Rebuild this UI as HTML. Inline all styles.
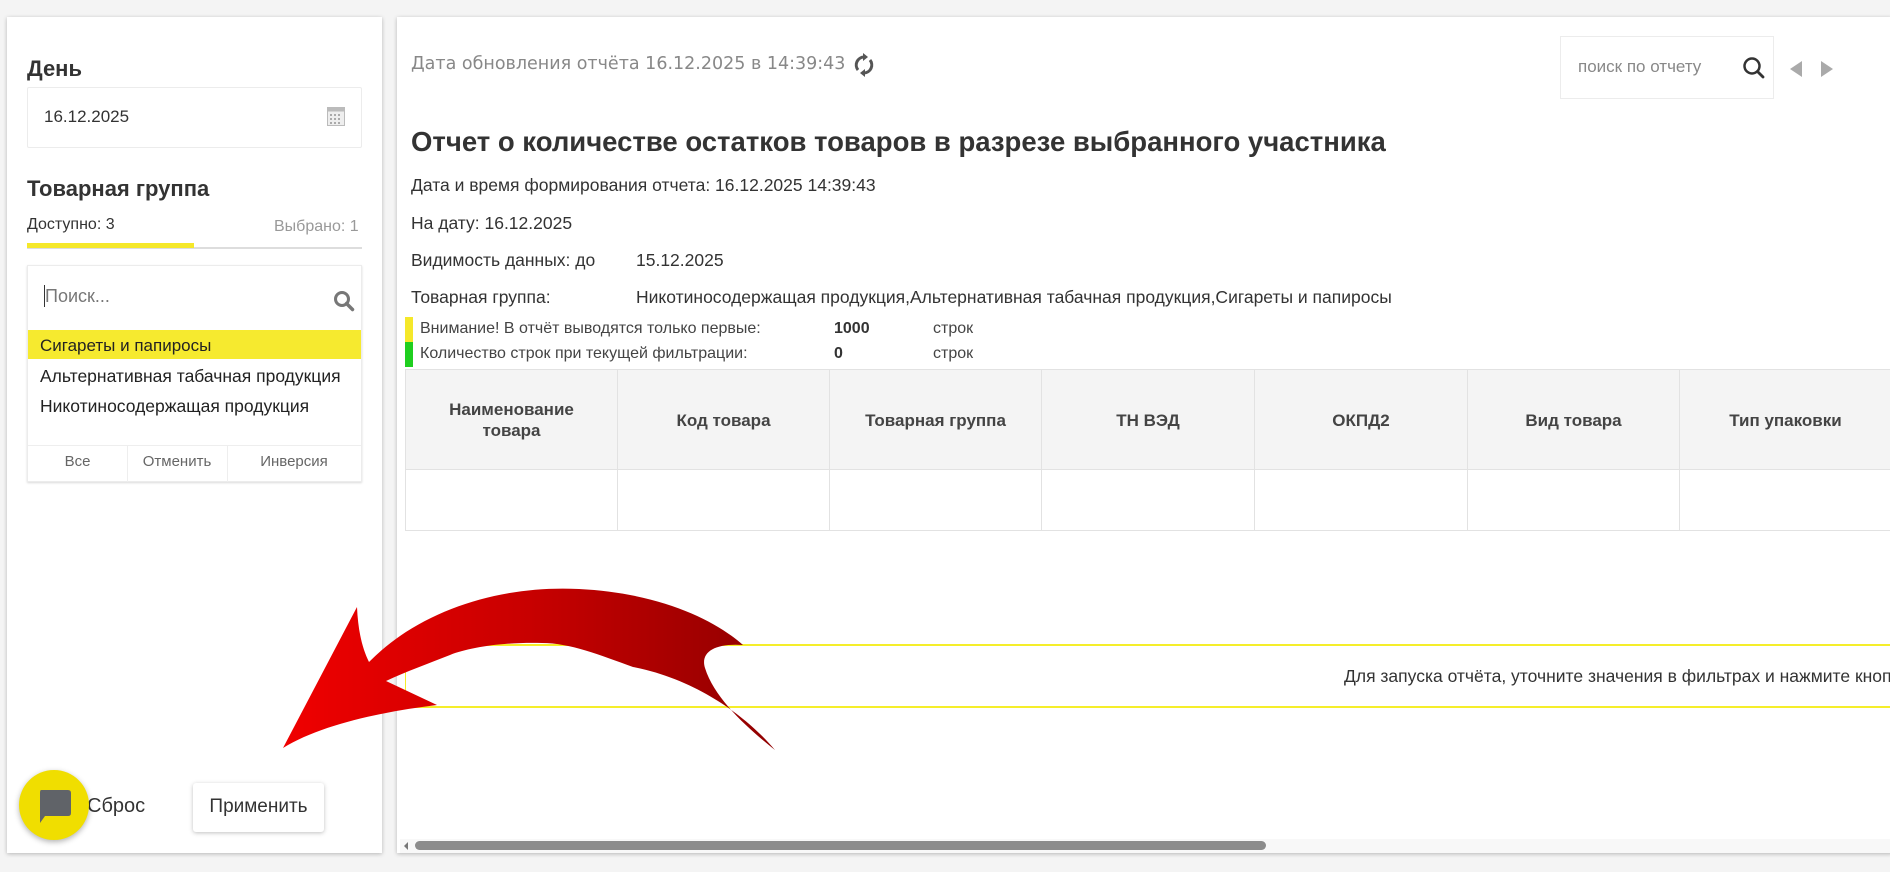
<!DOCTYPE html>
<html><head><meta charset="utf-8">
<style>
*{margin:0;padding:0;box-sizing:border-box}
html,body{width:1890px;height:872px;overflow:hidden;background:#f4f4f4;font-family:"Liberation Sans",Arial,sans-serif;color:#333}
.abs{position:absolute}
.panel{position:absolute;background:#fff;box-shadow:0 1px 4px rgba(0,0,0,.25)}
.t{position:absolute;white-space:nowrap}
.th{position:absolute;top:0;height:100px;border-right:1px solid #e2e2e2;display:flex;align-items:center;justify-content:center;text-align:center;font-weight:bold;font-size:17px;color:#444;line-height:21px}
.td{position:absolute;top:100px;height:61px;border-right:1px solid #e2e2e2}
</style></head><body>

<!-- left panel -->
<div class="panel" style="left:7px;top:17px;width:375px;height:836px"></div>
<div class="t" style="left:27px;top:56px;font-size:22px;font-weight:bold;color:#333">День</div>
<div class="abs" style="left:27px;top:87px;width:335px;height:61px;border:1px solid #ececec;border-radius:2px"></div>
<div class="t" style="left:44px;top:107px;font-size:17px;color:#333">16.12.2025</div>
<svg class="abs" style="left:327px;top:107px" width="18" height="19" viewBox="0 0 18 19"><rect x="0.5" y="0.5" width="17" height="18" fill="#eee" stroke="#bbb"/><rect x="0.5" y="0.5" width="17" height="4" fill="#bbb"/><g fill="#aaa"><rect x="3" y="7" width="2" height="2"/><rect x="7" y="7" width="2" height="2"/><rect x="11" y="7" width="2" height="2"/><rect x="3" y="11" width="2" height="2"/><rect x="7" y="11" width="2" height="2"/><rect x="11" y="11" width="2" height="2"/><rect x="3" y="15" width="2" height="2"/><rect x="7" y="15" width="2" height="2"/><rect x="11" y="15" width="2" height="2"/></g></svg>

<div class="t" style="left:27px;top:176px;font-size:22px;font-weight:bold;color:#333">Товарная группа</div>
<div class="t" style="left:27px;top:216px;font-size:16px;color:#333">Доступно: 3</div>
<div class="t" style="left:274px;top:218px;font-size:16px;color:#999">Выбрано: 1</div>
<div class="abs" style="left:27px;top:247px;width:335px;height:2px;background:#ddd"></div>
<div class="abs" style="left:27px;top:243px;width:167px;height:5px;background:#f5e82a"></div>

<div class="abs" style="left:27px;top:265px;width:335px;height:217px;border:1px solid #ececec;box-shadow:0 1px 2px rgba(0,0,0,.15)"></div>
<div class="abs" style="left:44px;top:285px;width:1px;height:22px;background:#333"></div>
<div class="t" style="left:45px;top:286px;font-size:18px;color:#777">Поиск...</div>
<svg class="abs" style="left:333px;top:290px" width="22" height="22" viewBox="0 0 22 22"><circle cx="9" cy="9" r="6.5" fill="none" stroke="#777" stroke-width="3"/><line x1="13.5" y1="13.5" x2="19.5" y2="19.5" stroke="#777" stroke-width="3.5" stroke-linecap="round"/></svg>
<div class="abs" style="left:28px;top:330px;width:333px;height:29px;background:#f6ea2f"></div>
<div class="t" style="left:40px;top:336px;font-size:17px;color:#222">Сигареты и папиросы</div>
<div class="t" style="left:40px;top:366px;font-size:17.5px;color:#222">Альтернативная табачная продукция</div>
<div class="t" style="left:40px;top:396px;font-size:17.5px;color:#222">Никотиносодержащая продукция</div>
<div class="abs" style="left:28px;top:445px;width:333px;height:1px;background:#eee"></div>
<div class="abs" style="left:127px;top:446px;width:1px;height:36px;background:#eee"></div>
<div class="abs" style="left:227px;top:446px;width:1px;height:36px;background:#eee"></div>
<div class="t" style="left:28px;top:453px;width:99px;text-align:center;font-size:15px;color:#666">Все</div>
<div class="t" style="left:127px;top:453px;width:100px;text-align:center;font-size:15px;color:#666">Отменить</div>
<div class="t" style="left:227px;top:453px;width:134px;text-align:center;font-size:15px;color:#666">Инверсия</div>

<div class="t" style="left:87px;top:795px;font-size:20px;color:#333">Сброс</div>
<div class="abs" style="left:193px;top:783px;width:131px;height:49px;background:#fff;border-radius:3px;box-shadow:0 1px 4px rgba(0,0,0,.25)"></div>
<div class="t" style="left:193px;top:796px;width:131px;text-align:center;font-size:19px;color:#333">Применить</div>
<div class="abs" style="left:19px;top:770px;width:70px;height:70px;border-radius:50%;background:#f0de00;box-shadow:0 2px 6px rgba(0,0,0,.3)"></div>
<svg class="abs" style="left:37px;top:790px" width="36" height="34" viewBox="0 0 36 34"><path d="M4 0 H31 Q34 0 34 3 V23 Q34 26 31 26 H8 L3 33 V3 Q3 0 4 0 Z" fill="#606368"/></svg>

<!-- right panel -->
<div class="panel" style="left:397px;top:17px;width:1496px;height:836px"></div>
<div class="t" style="left:411px;top:54px;font-family:'DejaVu Sans',Verdana,sans-serif;font-size:17.5px;color:#888">Дата обновления отчёта 16.12.2025 в 14:39:43</div>
<svg class="abs" style="left:853px;top:53px" width="22" height="24" viewBox="0 0 22 24"><path d="M11 4 A8 8 0 0 0 5 17" fill="none" stroke="#555" stroke-width="3"/><path d="M11 20 A8 8 0 0 0 17 7" fill="none" stroke="#555" stroke-width="3"/><path d="M10 0 L15 4 L10 8 Z" fill="#555"/><path d="M12 24 L7 20 L12 16 Z" fill="#555"/></svg>

<div class="abs" style="left:1560px;top:36px;width:214px;height:63px;border:1px solid #ececec"></div>
<div class="t" style="left:1578px;top:57px;font-size:17px;color:#888">поиск по отчету</div>
<svg class="abs" style="left:1742px;top:56px" width="24" height="24" viewBox="0 0 24 24"><circle cx="10" cy="10" r="7.5" fill="none" stroke="#333" stroke-width="2.5"/><line x1="15.5" y1="15.5" x2="21" y2="21" stroke="#333" stroke-width="2.8" stroke-linecap="round"/></svg>
<svg class="abs" style="left:1787px;top:60px" width="50" height="18" viewBox="0 0 50 18"><path d="M15 1 L3 9 L15 17 Z" fill="#aaa"/><path d="M34 1 L46 9 L34 17 Z" fill="#aaa"/></svg>

<div class="t" style="left:411px;top:126px;font-size:27.5px;font-weight:bold;color:#333">Отчет о количестве остатков товаров в разрезе выбранного участника</div>
<div class="t" style="left:411px;top:175px;font-size:17.5px;color:#333">Дата и время формирования отчета: 16.12.2025 14:39:43</div>
<div class="t" style="left:411px;top:213px;font-size:17.5px;color:#333">На дату: 16.12.2025</div>
<div class="t" style="left:411px;top:250px;font-size:17.5px;color:#333">Видимость данных: до</div>
<div class="t" style="left:636px;top:250px;font-size:17.5px;color:#333">15.12.2025</div>
<div class="t" style="left:411px;top:287px;font-size:17.5px;color:#333">Товарная группа:</div>
<div class="t" style="left:636px;top:287px;font-size:17.5px;color:#333">Никотиносодержащая продукция,Альтернативная табачная продукция,Сигареты и папиросы</div>

<div class="abs" style="left:405px;top:317px;width:8px;height:25px;background:#f5e82a"></div>
<div class="abs" style="left:405px;top:342px;width:8px;height:25px;background:#1fcf1f"></div>
<div class="t" style="left:420px;top:320px;font-size:16px;color:#444">Внимание! В отчёт выводятся только первые:</div>
<div class="t" style="left:834px;top:320px;font-size:16px;font-weight:bold;color:#333">1000</div>
<div class="t" style="left:933px;top:320px;font-size:16px;color:#444">строк</div>
<div class="t" style="left:420px;top:345px;font-size:16px;color:#444">Количество строк при текущей фильтрации:</div>
<div class="t" style="left:834px;top:345px;font-size:16px;font-weight:bold;color:#333">0</div>
<div class="t" style="left:933px;top:345px;font-size:16px;color:#444">строк</div>

<div class="abs" style="left:405px;top:369px;width:1488px;height:162px;border:1px solid #e2e2e2;overflow:hidden">
 <div class="abs" style="left:0;top:0;width:1488px;height:100px;background:#f4f4f4;border-bottom:1px solid #e2e2e2"></div>
 <div class="th" style="left:0;width:212px">Наименование<br>товара</div>
 <div class="th" style="left:212px;width:212px">Код товара</div>
 <div class="th" style="left:424px;width:212px">Товарная группа</div>
 <div class="th" style="left:636px;width:213px">ТН ВЭД</div>
 <div class="th" style="left:849px;width:213px">ОКПД2</div>
 <div class="th" style="left:1062px;width:212px">Вид товара</div>
 <div class="th" style="left:1274px;width:212px">Тип упаковки</div>
 <div class="td" style="left:0;width:212px"></div>
 <div class="td" style="left:212px;width:212px"></div>
 <div class="td" style="left:424px;width:212px"></div>
 <div class="td" style="left:636px;width:213px"></div>
 <div class="td" style="left:849px;width:213px"></div>
 <div class="td" style="left:1062px;width:212px"></div>
 <div class="td" style="left:1274px;width:212px"></div>
</div>

<div class="abs" style="left:405px;top:644px;width:1488px;height:64px;border-top:2px solid #f5ee2a;border-bottom:2px solid #f5ee2a;border-left:1px solid #f5ee2a;overflow:hidden">
 <div class="t" style="left:938px;top:20px;font-size:17.5px;color:#333">Для запуска отчёта, уточните значения в фильтрах и нажмите кнопку</div>
</div>

<div class="abs" style="left:400px;top:839px;width:1490px;height:14px;background:#f8f8f8"></div>
<div class="abs" style="left:415px;top:841px;width:851px;height:9px;border-radius:5px;background:#8c8c8c"></div>
<svg class="abs" style="left:402px;top:840px" width="8" height="12"><path d="M6 2 L2 6 L6 10 Z" fill="#777"/></svg>

<!-- red arrow -->
<svg class="abs" style="left:0;top:0" width="1890" height="872" viewBox="0 0 1890 872">
 <defs><linearGradient id="g" x1="283" y1="0" x2="775" y2="0" gradientUnits="userSpaceOnUse"><stop offset="0" stop-color="#f00000"/><stop offset="0.5" stop-color="#c80000"/><stop offset="1" stop-color="#900000"/></linearGradient></defs>
 <path d="M283,748 L357,607 C358,630 362,648 369,662 C420,610 500,585 579,589 C660,593 715,620 743,645 C715,643 700,652 705,668 C715,700 750,730 775,750 C750,720 700,680 633,667 C600,655 570,643 542,643 C505,642 470,647 450,655 C430,663 405,672 386,681 L437,705 C380,712 320,725 283,748 Z" fill="url(#g)"/>
</svg>

</body></html>
